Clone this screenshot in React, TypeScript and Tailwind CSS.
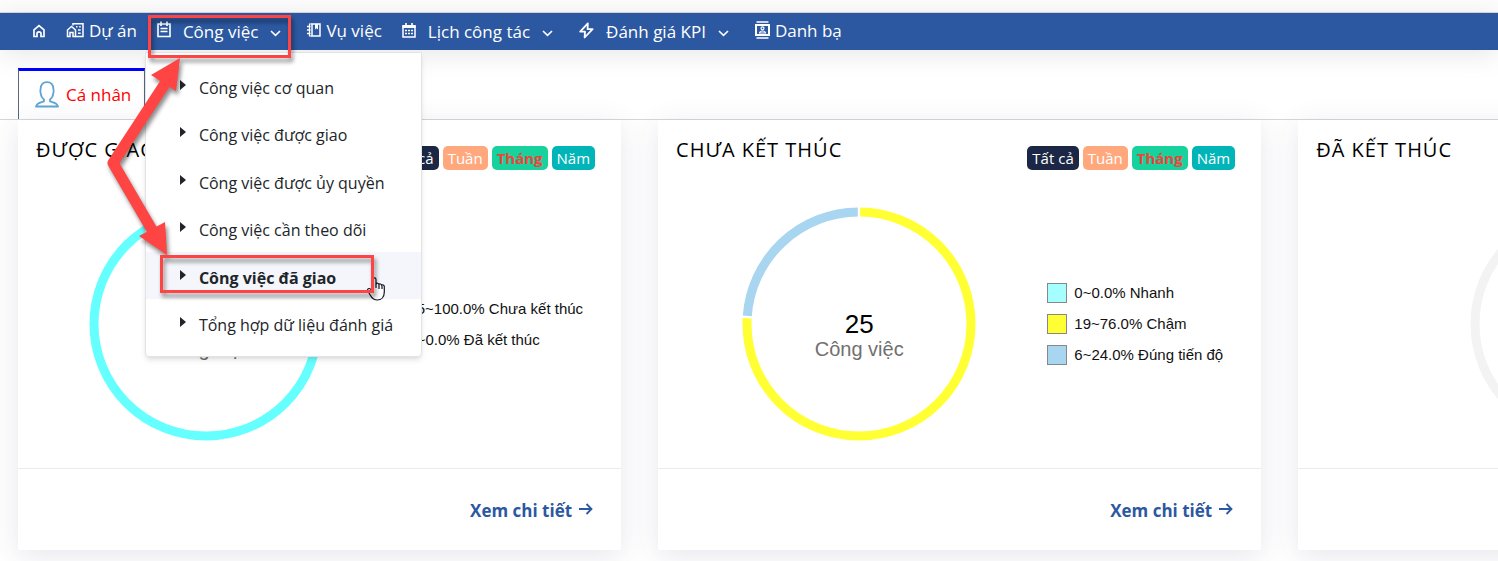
import React from "react";

interface Period {
  label: string;
  className: string;
}

interface LegendItem {
  label: string;
  className: string;
}

interface Segment {
  color: string;
  percent: number;
}

interface StatCardProps {
  title: string;
  total: number;
  segments: Segment[];
  legend: LegendItem[];
}

const periods: Period[] = [
  { label: "Tất cả", className: "bg-[#1b2744] text-white" },
  { label: "Tuần", className: "bg-[#ffa87d] text-white" },
  { label: "Tháng", className: "bg-[#17d29c] font-bold text-[#f0433a]" },
  { label: "Năm", className: "bg-[#00b5b8] text-white" },
];

const menuItems: string[] = [
  "Công việc cơ quan",
  "Công việc được giao",
  "Công việc được ủy quyền",
  "Công việc cần theo dõi",
  "Công việc đã giao",
  "Tổng hợp dữ liệu đánh giá",
];

const activeItem = "Công việc đã giao";

const cards: StatCardProps[] = [
  {
    title: "ĐƯỢC GIAO",
    total: 25,
    segments: [{ color: "#66ffff", percent: 100 }],
    legend: [
      { label: "25~100.0% Chưa kết thúc", className: "bg-[#a6ffff]" },
      { label: "0~0.0% Đã kết thúc", className: "bg-[#ffff33]" },
    ],
  },
  {
    title: "CHƯA KẾT THÚC",
    total: 25,
    segments: [
      { color: "#ffff33", percent: 76 },
      { color: "#a8d5f0", percent: 24 },
    ],
    legend: [
      { label: "0~0.0% Nhanh", className: "bg-[#a6ffff]" },
      { label: "19~76.0% Chậm", className: "bg-[#ffff33]" },
      { label: "6~24.0% Đúng tiến độ", className: "bg-[#a8d5f0]" },
    ],
  },
  {
    title: "ĐÃ KẾT THÚC",
    total: 0,
    segments: [{ color: "#f3f3f3", percent: 100 }],
    legend: [],
  },
];

const HomeIcon = () => (
  <svg className="mb-0.5" width="14" height="14" viewBox="0 0 14 14" fill="none" stroke="white" strokeWidth="1.700">
    <path d="M2 12.500V5.800L7 1.600 12 5.800V12.500H9V9.500C9 8.300 8.200 7.800 7 7.800S5 8.300 5 9.500V12.500Z" />
  </svg>
);

const ProjectIcon = () => (
  <svg className="mb-0.5" width="18" height="16" viewBox="0 0 18 16" fill="none" stroke="white" strokeWidth="1.500">
    <path d="M1.500 14.500V8L5.500 4.500 9.500 8V14.500H7V10.500H4V14.500Z" />
    <path d="M7 3.500V1.800H17V14.500H9.500" />
    <path d="M10 4.700H11.500M13.200 4.700H14.700M12 8H14.700M12 11.300H14.700" />
  </svg>
);

const TaskIcon = () => (
  <svg className="mb-1" width="14" height="17" viewBox="0 0 14 17" fill="none" stroke="white" strokeWidth="1.600">
    <path d="M1 3H13V15.500H1Z" />
    <path d="M4 0.500V5M10 0.500V5" strokeWidth="1.800" />
    <path d="M3.500 7.500H10.500M3.500 10.500H10.500" />
  </svg>
);

const NotebookIcon = () => (
  <svg className="mb-0.5" width="14" height="14" viewBox="0 0 14 14" fill="none" stroke="white" strokeWidth="1.500">
    <path d="M5 1H13V13H5Z" />
    <path d="M5 1H2.500V13H5" strokeWidth="1.200" />
    <path d="M0 3.500H3.500M0 7H3.500M0 10.500H3.500" />
    <path d="M8 1H11V6.500L9.500 5.200 8 6.500Z" fill="white" stroke="none" />
  </svg>
);

const CalendarIcon = () => (
  <svg className="mb-0.5" width="14" height="15" viewBox="0 0 14 15" fill="none" stroke="white">
    <path d="M1 3H13V14H1Z" strokeWidth="1.500" />
    <path d="M0.500 3.500H13.500" strokeWidth="3" />
    <path d="M4 0V3M10 0V3" strokeWidth="1.600" />
    <path d="M3 7.500H11M3 10.500H11" strokeWidth="1.700" strokeDasharray="2 1" />
  </svg>
);

const BoltIcon = () => (
  <svg className="mb-0.5" width="15" height="17" viewBox="0 0 15 17" fill="none" stroke="white" strokeWidth="1.800" strokeLinejoin="round">
    <path d="M8.800 1.300 1.200 9.600H6L5.600 15.500 13.600 7.200H8.600Z" />
  </svg>
);

const ContactIcon = () => (
  <svg className="mb-0.5" width="15" height="18" viewBox="0 0 15 18" fill="none" stroke="white" strokeWidth="1.500">
    <path d="M1.500 1H13.500M1.500 17H13.500" />
    <path d="M1 4H14V14H1Z" strokeWidth="2" />
    <circle cx="7.500" cy="7.300" r="1.500" strokeWidth="1.200" />
    <path d="M4.500 12C4.700 10.500 5.800 10 7.500 10s2.800.5 3 2Z" strokeWidth="1.200" />
  </svg>
);

const ChevronIcon = () => (
  <svg className="mt-1" width="11" height="7" viewBox="0 0 11 7" fill="none" stroke="white" strokeWidth="1.600">
    <path d="M1 1 5.500 5.400 10 1" />
  </svg>
);

const UserIcon = () => (
  <svg width="24" height="27" viewBox="0 0 24 27" fill="none" stroke="#5ea5d5" strokeWidth="1.800" strokeLinejoin="round">
    <path d="M9 18.500C7 17 6 15 5.800 12.500C5 11 5.400 9.500 5.600 8C5.800 3.500 8 1.200 12 1.200s6.200 2.300 6.400 6.800c.2 1.500.6 3-.2 4.500C18 15 17 17 15 18.500v1.800c3 1.200 7 1 8 5.200H1c1-4.200 5-4 8-5.200Z" />
  </svg>
);

interface NavItemProps {
  icon: React.ReactNode;
  label: string;
  hasMenu?: boolean;
}

const NavItem: React.FC<NavItemProps> = ({ icon, label, hasMenu }) => {
  if (hasMenu) {
    return (
      <button type="button" className="flex cursor-pointer items-center gap-3 pr-1.5 whitespace-nowrap">
        {icon}
        <span>{label}</span>
        <ChevronIcon />
      </button>
    );
  }

  return (
    <a href="#" className="flex items-center gap-[5px] pb-0.5 whitespace-nowrap">
      {icon}
      <span>{label}</span>
    </a>
  );
};

const WorkMenu: React.FC = () => (
  <ul className="absolute top-[39px] -left-3 z-20 w-[277px] rounded-b border border-[#e3e3e6] bg-white py-[9px] text-base text-[#212529] shadow-md">
    {menuItems.map((item) => (
      <li key={item} className="odd:h-[47px] even:h-12">
        <a
          href="#"
          className={`flex h-full items-center pl-[34px] whitespace-nowrap ${
            item === activeItem ? "bg-[#f5f6fb] font-bold" : ""
          }`}
        >
          <svg className="mr-[13px] mb-0.5" width="6" height="10" viewBox="0 0 6 10">
            <path d="M0 0 6 5 0 10Z" fill="#212529" />
          </svg>
          <span className="pt-1">{item}</span>
        </a>
      </li>
    ))}
  </ul>
);

const Donut: React.FC<{ segments: Segment[]; total: number }> = ({ segments, total }) => {
  let start = 0;

  return (
    <div className="relative">
      <svg width="234" height="234" viewBox="0 0 234 234">
        <g transform="rotate(-90 117 117)" fill="none" strokeWidth="9">
          {segments.map((segment) => {
            const gap = segments.length > 1 ? 0.35 : 0;
            const offset = start;
            start += segment.percent;
            return (
              <circle
                key={segment.color}
                cx="117"
                cy="117"
                r="112"
                pathLength={100}
                stroke={segment.color}
                strokeDasharray={`${segment.percent - gap} ${100 - segment.percent + gap}`}
                strokeDashoffset={-(offset + gap / 2)}
              />
            );
          })}
        </g>
      </svg>
      <div className="absolute inset-0 flex flex-col items-center justify-center pt-6 font-['Liberation_Sans',Arial,sans-serif]">
        <span className="text-[26px] leading-[26px] text-black">{total}</span>
        <span className="text-xl leading-6 text-[#707070]">Công việc</span>
      </div>
    </div>
  );
};

const StatCard: React.FC<StatCardProps> = ({ title, total, segments, legend }) => (
  <section className="shrink-0 basis-[40.75%] bg-white shadow-[0_6px_28px_rgba(60,60,110,0.12)]">
    <div className="flex items-start justify-between pt-[26px] pr-[26px] pl-[18px]">
      <h2 className="-mt-2 text-xl leading-6 tracking-wider text-black">{title}</h2>
      <div className="flex gap-1">
        {periods.map((period) => (
          <button
            key={period.label}
            type="button"
            className={`h-6 cursor-pointer rounded-[5px] px-[5px] text-[15px] leading-6 ${period.className}`}
          >
            {period.label}
          </button>
        ))}
      </div>
    </div>
    <div className="flex items-center pt-[37px] pr-[38px] pb-[27px] pl-[13px]">
      <div className="flex flex-1 justify-center">
        <Donut segments={segments} total={total} />
      </div>
      {legend.length > 0 && (
        <ul className="flex flex-col gap-[11px] font-['Liberation_Sans',Arial,sans-serif] text-[15px] leading-5 text-[#111]">
          {legend.map((item) => (
            <li key={item.label} className="flex gap-[7px]">
              <span className={`size-5 border border-[#888] ${item.className}`} />
              {item.label}
            </li>
          ))}
        </ul>
      )}
    </div>
    <div className="flex justify-end border-t border-[#ebebee] pt-[30px] pr-7 pb-[27px]">
      <a href="#" className="flex items-center gap-[7px] text-[17px] leading-6 font-bold text-[#2b58a0]">
        Xem chi tiết
        <svg className="mb-1" width="14" height="12" viewBox="0 0 14 12" fill="none" stroke="#2b58a0" strokeWidth="1.800">
          <path d="M0 6H12.500M7.500 1 12.500 6 7.500 11" />
        </svg>
      </a>
    </div>
  </section>
);

// Red frames and arrows that point from the menu button to the active entry
const GuideOverlay: React.FC = () => (
  <svg className="pointer-events-none absolute top-0 left-0 z-30" width="430" height="320" viewBox="0 0 430 320">
    <g fill="white" stroke="#111122" strokeWidth="1.200" strokeLinejoin="round">
      <path d="M373 290V279.500c0-2.300 3-2.300 3 0V284c.6-1.200 2.700-1 2.900.5.700-1 2.500-.7 2.700.8.900-.8 2.700-.3 2.700 1.500V292c0 5-3 8-7 8-3.500 0-5-1.500-6.500-4l-3-5c-1-2 1.300-3.300 2.700-1.800Z" />
      <path d="M376 284v4M379 285v4M382 286v3" />
    </g>
    <g className="drop-shadow-[2px_4px_2px_rgba(0,0,0,0.45)]">
      <rect x="149.500" y="16.500" width="140" height="40" fill="none" stroke="#ff4444" strokeWidth="3" />
      <rect x="161.500" y="256.500" width="211" height="35" fill="none" stroke="#ff4444" strokeWidth="3" />
      <path d="M168 79 113 163 155 235" fill="none" stroke="#ff4444" strokeWidth="11" strokeLinejoin="round" />
      <path d="M180 58 151 75 176 91Z" fill="#ff4444" />
      <path d="M167 255 139 236 165 222Z" fill="#ff4444" />
    </g>
  </svg>
);

const App: React.FC = () => {
  return (
    <div className="relative overflow-hidden bg-white pb-3 font-['Open_Sans','Noto_Sans',sans-serif] text-base">
      <div className="h-[13px] border-b border-[#d9d9dc] bg-[#fdfdfd]" />
      <nav className="relative z-10 flex h-[37px] items-stretch gap-5 bg-[#2b58a0] pl-8 text-[17px] leading-6 text-white shadow-[0_4px_28px_rgba(0,0,0,0.1)]">
        <a href="#" aria-label="Trang chủ" className="flex items-center">
          <HomeIcon />
        </a>
        <NavItem icon={<ProjectIcon />} label="Dự án" />
        <div className="relative flex">
          <NavItem icon={<TaskIcon />} label="Công việc" hasMenu />
          <WorkMenu />
        </div>
        <NavItem icon={<NotebookIcon />} label="Vụ việc" />
        <NavItem icon={<CalendarIcon />} label="Lịch công tác" hasMenu />
        <NavItem icon={<BoltIcon />} label="Đánh giá KPI" hasMenu />
        <NavItem icon={<ContactIcon />} label="Danh bạ" />
      </nav>
      <div className="border-b border-[#d6d6da] pt-[18px] pl-[18px]">
        <button
          type="button"
          className="flex w-[127px] cursor-pointer items-center gap-[7px] border-x border-t-[3px] border-x-[#566889] border-t-[#0000ff] bg-white pt-[10px] pb-[11px] pl-4 text-[17px] leading-6 whitespace-nowrap text-[#ff0000]"
        >
          <UserIcon />
          <span>Cá nhân</span>
        </button>
      </div>
      <main className="flex gap-[37px] pl-[18px]">
        {cards.map((card) => (
          <StatCard key={card.title} {...card} />
        ))}
      </main>
      <GuideOverlay />
    </div>
  );
};

export default App;
